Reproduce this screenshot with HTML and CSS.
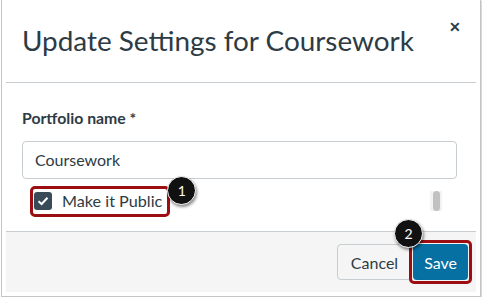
FILE: index.html
```html
<!DOCTYPE html>
<html lang="en">
<head>
    <meta charset="UTF-8">
    <title>Update Settings</title>
    <link rel="stylesheet" href="styles.css">
</head>
<body>
    <div class="modal">
        <header class="modal-header">
            <h1>Update Settings for Coursework</h1>
            <span class="close">&#x2715;</span>
        </header>

        <div class="modal-body">
            <label class="field-label" for="portfolio-name">Portfolio name *</label>
            <input class="text-input" id="portfolio-name" type="text" value="Coursework">
            <div class="check-row">
                <div class="highlight">
                    <span class="checkbox">
                        <svg width="12" height="10" viewBox="0 0 12 10"><path d="M1.5 5.2 L4.6 8 L10.5 1.8" fill="none" stroke="#fff" stroke-width="2"/></svg>
                    </span>
                    <span class="check-label">Make it Public</span>
                    <span class="badge badge-one">1</span>
                </div>
                <div class="scroll-thumb"><span></span></div>
            </div>
        </div>

        <footer class="modal-footer">
            <button class="btn btn-cancel">Cancel</button>
            <div class="save-wrap">
                <button class="btn btn-save">Save</button>
                <span class="badge badge-two">2</span>
            </div>
        </footer>
    </div>
</body>
</html>
```

FILE: styles.css
```css
body {
    margin: 0;
    background-color: #fff;
    font-family: Lato, "Open Sans", sans-serif;
    color: #2d3b45;
}

.modal {
    box-sizing: border-box;
    width: 480px;
    height: 297px;
    margin-left: 1px;
    border: 1px solid #c4c4c4;
    border-top: none;
    box-shadow: 1px 1px 1px rgba(0, 0, 0, 0.15);
    padding: 0 4px;
    display: flex;
    flex-direction: column;
}

.modal-header {
    height: 82px;
    border-bottom: 1px solid #c7cdd1;
    display: flex;
    justify-content: space-between;
    padding: 0 0 0 16px;
}

.modal-header h1 {
    margin: 0;
    padding-top: 24px;
    font-size: 27.9px;
    font-weight: 400;
    line-height: 32px;
}

.close {
    font-size: 14px;
    font-weight: 700;
    padding: 18px 15px 0 0;
    color: #2d3b45;
}

.modal-body {
    padding: 26px 19px 0 16px;
    height: 123px;
}

.field-label {
    display: block;
    font-size: 15.8px;
    font-weight: 700;
    line-height: 18px;
    margin-bottom: 14px;
}

.text-input {
    display: block;
    width: 100%;
    box-sizing: border-box;
    height: 38px;
    border: 1px solid #c7cdd1;
    border-radius: 4px;
    padding: 0 12px;
    font-family: Lato, sans-serif;
    font-size: 16px;
    color: #2d3b45;
}

.check-row {
    display: flex;
    justify-content: space-between;
    align-items: center;
    margin-top: 7px;
    padding-left: 8px;
}

.highlight {
    position: relative;
    display: flex;
    align-items: center;
    gap: 10px;
    border: 3px solid #9b0f12;
    border-radius: 5px;
    padding: 2px 5px 3px 1px;
}

.checkbox {
    width: 18px;
    height: 18px;
    border-radius: 3px;
    background-color: #394b58;
    display: flex;
    align-items: center;
    justify-content: center;
}

.check-label {
    font-size: 16.2px;
    line-height: 20px;
}

.badge {
    position: absolute;
    width: 27px;
    height: 27px;
    border-radius: 50%;
    background-color: #111;
    border: 1px solid #fff;
    box-shadow: 1px 2px 3px rgba(0, 0, 0, 0.45);
    color: #fff;
    font-size: 14px;
    line-height: 27px;
    text-align: center;
}

.badge-one {
    right: -29px;
    top: -13px;
}

.scroll-thumb {
    width: 12px;
    height: 20px;
    background-color: #f3f3f3;
    display: flex;
    justify-content: center;
    margin-right: 15px;
}

.scroll-thumb span {
    width: 7px;
    height: 20px;
    border-radius: 4px;
    background-color: #c1c1c1;
}

.modal-footer {
    height: 60px;
    background-color: #f5f5f5;
    border-top: 1px solid #c7cdd1;
    display: flex;
    justify-content: flex-end;
    align-items: center;
    padding-right: 4px;
    margin-bottom: 4px;
}

.btn {
    font-family: Lato, sans-serif;
    font-size: 16px;
    height: 36px;
    border-radius: 4px;
}

.btn-cancel {
    background-color: #f5f5f5;
    border: 1px solid #c7cdd1;
    color: #2d3b45;
    padding: 0 13px;
}

.save-wrap {
    position: relative;
    border: 3px solid #9b0f12;
    border-radius: 5px;
    padding: 1px;
    margin-left: -3px;
}

.btn-save {
    display: block;
    background-color: #0770a3;
    border: none;
    color: #fff;
    padding: 0 11px;
}

.badge-two {
    left: -18px;
    top: -24px;
}
```
